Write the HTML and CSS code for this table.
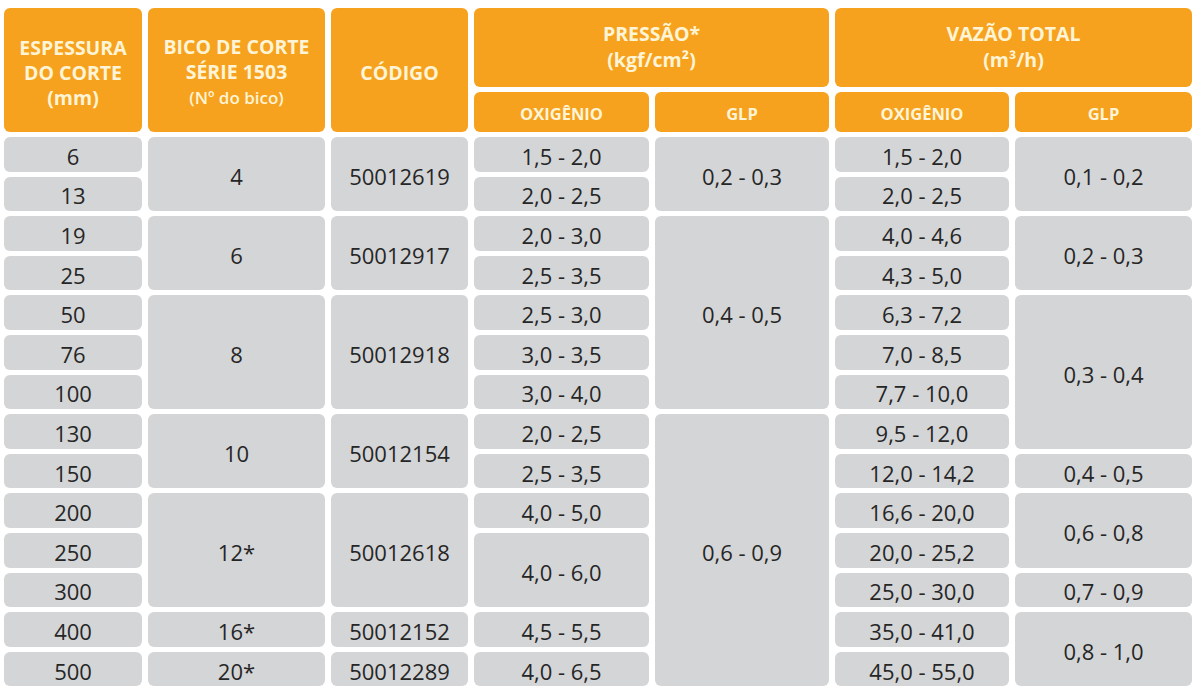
FILE: index.html
```html
<!DOCTYPE html>
<html lang="pt-BR">
<head>
<meta charset="utf-8">
<title>Bico de corte série 1503</title>
<link rel="stylesheet" href="styles.css">
</head>
<body>
<div class="table">
  <div class="hd span-r2"><span>ESPESSURA<br>DO CORTE<br>(mm)</span></div>
  <div class="hd span-r2"><span>BICO DE CORTE<br>SÉRIE 1503<br><small>(Nº do bico)</small></span></div>
  <div class="hd span-r2 hd-code"><span>CÓDIGO</span></div>
  <div class="hd span-c2 hd-group"><span>PRESSÃO*<br>(kgf/cm²)</span></div>
  <div class="hd span-c2 hd-group"><span>VAZÃO TOTAL<br>(m³/h)</span></div>
  <div class="hd sub">OXIGÊNIO</div>
  <div class="hd sub">GLP</div>
  <div class="hd sub">OXIGÊNIO</div>
  <div class="hd sub">GLP</div>

  <!-- row 1 -->
  <div class="c">6</div>
  <div class="c span-r2">4</div>
  <div class="c span-r2">50012619</div>
  <div class="c">1,5 - 2,0</div>
  <div class="c span-r2">0,2 - 0,3</div>
  <div class="c">1,5 - 2,0</div>
  <div class="c span-r2">0,1 - 0,2</div>
  <!-- row 2 -->
  <div class="c">13</div>
  <div class="c">2,0 - 2,5</div>
  <div class="c">2,0 - 2,5</div>
  <!-- row 3 -->
  <div class="c">19</div>
  <div class="c span-r2">6</div>
  <div class="c span-r2">50012917</div>
  <div class="c">2,0 - 3,0</div>
  <div class="c span-r5">0,4 - 0,5</div>
  <div class="c">4,0 - 4,6</div>
  <div class="c span-r2">0,2 - 0,3</div>
  <!-- row 4 -->
  <div class="c">25</div>
  <div class="c">2,5 - 3,5</div>
  <div class="c">4,3 - 5,0</div>
  <!-- row 5 -->
  <div class="c">50</div>
  <div class="c span-r3">8</div>
  <div class="c span-r3">50012918</div>
  <div class="c">2,5 - 3,0</div>
  <div class="c">6,3 - 7,2</div>
  <div class="c span-r4">0,3 - 0,4</div>
  <!-- row 6 -->
  <div class="c">76</div>
  <div class="c">3,0 - 3,5</div>
  <div class="c">7,0 - 8,5</div>
  <!-- row 7 -->
  <div class="c">100</div>
  <div class="c">3,0 - 4,0</div>
  <div class="c">7,7 - 10,0</div>
  <!-- row 8 -->
  <div class="c">130</div>
  <div class="c span-r2">10</div>
  <div class="c span-r2">50012154</div>
  <div class="c">2,0 - 2,5</div>
  <div class="c span-r7">0,6 - 0,9</div>
  <div class="c">9,5 - 12,0</div>
  <!-- row 9 -->
  <div class="c">150</div>
  <div class="c">2,5 - 3,5</div>
  <div class="c">12,0 - 14,2</div>
  <div class="c">0,4 - 0,5</div>
  <!-- row 10 -->
  <div class="c">200</div>
  <div class="c span-r3">12*</div>
  <div class="c span-r3">50012618</div>
  <div class="c">4,0 - 5,0</div>
  <div class="c">16,6 - 20,0</div>
  <div class="c span-r2">0,6 - 0,8</div>
  <!-- row 11 -->
  <div class="c">250</div>
  <div class="c span-r2">4,0 - 6,0</div>
  <div class="c">20,0 - 25,2</div>
  <!-- row 12 -->
  <div class="c">300</div>
  <div class="c">25,0 - 30,0</div>
  <div class="c">0,7 - 0,9</div>
  <!-- row 13 -->
  <div class="c">400</div>
  <div class="c">16*</div>
  <div class="c">50012152</div>
  <div class="c">4,5 - 5,5</div>
  <div class="c">35,0 - 41,0</div>
  <div class="c span-r2">0,8 - 1,0</div>
  <!-- row 14 -->
  <div class="c">500</div>
  <div class="c">20*</div>
  <div class="c">50012289</div>
  <div class="c">4,0 - 6,5</div>
  <div class="c">45,0 - 55,0</div>
</div>
</body>
</html>
```

FILE: styles.css
```css
html, body {
  margin: 0;
  background: #ffffff;
}

body {
  padding: 8px 4px;
  font-family: "Open Sans", "Noto Sans", "DejaVu Sans", sans-serif;
}

.table {
  display: grid;
  grid-template-columns: 138px 177px 137px 175px 174px 174px 177px;
  grid-template-rows: 79px 40px repeat(14, 34.6px);
  column-gap: 6px;
  row-gap: 5px;
}

.hd {
  background: #f6a21e;
  color: #fff4d6;
  font-weight: 700;
  font-size: 19.5px;
  line-height: 25px;
  border-radius: 6px;
  display: flex;
  align-items: center;
  justify-content: center;
  text-align: center;
  padding-top: 4px;
}

.hd small {
  font-size: 17px;
  font-weight: 600;
}

.hd-code {
  font-size: 19.5px;
}

.hd-group {
  font-size: 19.5px;
  line-height: 26px;
  padding-top: 0;
  padding-bottom: 2px;
}

.sub {
  font-size: 16.5px;
  padding-top: 3px;
}

.c {
  background: #d4d5d7;
  color: #262626;
  font-size: 22px;
  border-radius: 6px;
  display: flex;
  align-items: center;
  justify-content: center;
  padding-top: 3px;
  white-space: nowrap;
}

.span-r2 { grid-row: span 2; }
.span-r3 { grid-row: span 3; }
.span-r4 { grid-row: span 4; }
.span-r5 { grid-row: span 5; }
.span-r7 { grid-row: span 7; }
.span-c2 { grid-column: span 2; }
```
